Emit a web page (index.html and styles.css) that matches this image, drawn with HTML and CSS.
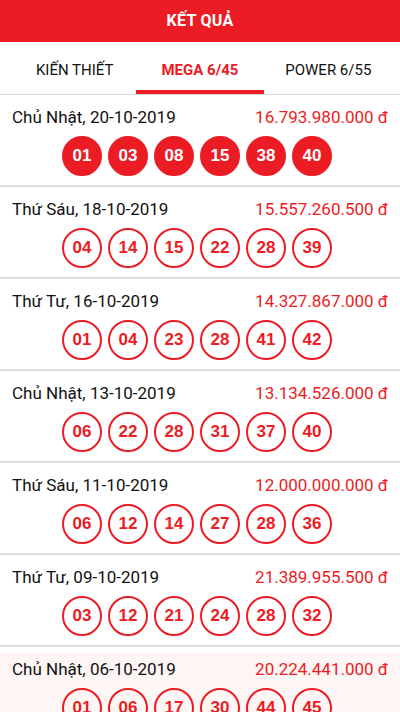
FILE: index.html
```html
<!DOCTYPE html>
<html lang="vi">
<head>
  <meta charset="UTF-8">
  <title>Kết quả Mega 6/45</title>
  <meta name="viewport" content="width=device-width, initial-scale=1.0">
  <link rel="stylesheet" href="styles.css">
</head>
<body>
  <!-- Top bar -->
  <header class="topbar">KẾT QUẢ</header>

  <!-- Game tabs -->
  <nav class="tabs">
    <div class="tab first">KIẾN THIẾT</div>
    <div class="tab active">MEGA 6/45</div>
    <div class="tab last">POWER 6/55</div>
  </nav>

  <!-- Draw results -->
  <main class="results">
    <div class="draw latest">
      <div class="draw-head">
        <span class="draw-date">Chủ Nhật, 20-10-2019</span>
        <span class="draw-jackpot">16.793.980.000 đ</span>
      </div>
      <div class="balls">
        <span class="ball">01</span><span class="ball">03</span><span class="ball">08</span>
        <span class="ball">15</span><span class="ball">38</span><span class="ball">40</span>
      </div>
    </div>

    <div class="draw">
      <div class="draw-head">
        <span class="draw-date">Thứ Sáu, 18-10-2019</span>
        <span class="draw-jackpot">15.557.260.500 đ</span>
      </div>
      <div class="balls">
        <span class="ball">04</span><span class="ball">14</span><span class="ball">15</span>
        <span class="ball">22</span><span class="ball">28</span><span class="ball">39</span>
      </div>
    </div>

    <div class="draw">
      <div class="draw-head">
        <span class="draw-date">Thứ Tư, 16-10-2019</span>
        <span class="draw-jackpot">14.327.867.000 đ</span>
      </div>
      <div class="balls">
        <span class="ball">01</span><span class="ball">04</span><span class="ball">23</span>
        <span class="ball">28</span><span class="ball">41</span><span class="ball">42</span>
      </div>
    </div>

    <div class="draw">
      <div class="draw-head">
        <span class="draw-date">Chủ Nhật, 13-10-2019</span>
        <span class="draw-jackpot">13.134.526.000 đ</span>
      </div>
      <div class="balls">
        <span class="ball">06</span><span class="ball">22</span><span class="ball">28</span>
        <span class="ball">31</span><span class="ball">37</span><span class="ball">40</span>
      </div>
    </div>

    <div class="draw">
      <div class="draw-head">
        <span class="draw-date">Thứ Sáu, 11-10-2019</span>
        <span class="draw-jackpot">12.000.000.000 đ</span>
      </div>
      <div class="balls">
        <span class="ball">06</span><span class="ball">12</span><span class="ball">14</span>
        <span class="ball">27</span><span class="ball">28</span><span class="ball">36</span>
      </div>
    </div>

    <div class="draw">
      <div class="draw-head">
        <span class="draw-date">Thứ Tư, 09-10-2019</span>
        <span class="draw-jackpot">21.389.955.500 đ</span>
      </div>
      <div class="balls">
        <span class="ball">03</span><span class="ball">12</span><span class="ball">21</span>
        <span class="ball">24</span><span class="ball">28</span><span class="ball">32</span>
      </div>
    </div>

    <div class="draw pressed">
      <div class="draw-head">
        <span class="draw-date">Chủ Nhật, 06-10-2019</span>
        <span class="draw-jackpot">20.224.441.000 đ</span>
      </div>
      <div class="balls">
        <span class="ball">01</span><span class="ball">06</span><span class="ball">17</span>
        <span class="ball">30</span><span class="ball">44</span><span class="ball">45</span>
      </div>
    </div>
  </main>
</body>
</html>
```

FILE: styles.css
```css
/* Lottery results screen, phone width */
body {
  margin: 0;
  height: 712px;
  overflow: hidden;
  font-family: Roboto, "Noto Sans", sans-serif;
  color: #111;
  background: #fff;
}

/* Red title bar */
.topbar {
  height: 42px;
  line-height: 42px;
  background: #ec1c24;
  color: #fff;
  text-align: center;
  font-size: 16px;
  font-weight: 700;
  letter-spacing: 0.3px;
}

/* Tabs */
.tabs {
  display: grid;
  grid-template-columns: 1fr 1fr 1fr;
  height: 52px;
  border-bottom: 1px solid #d6d6d6;
}
.tab {
  display: flex;
  align-items: center;
  justify-content: center;
  padding-top: 3px;
  font-size: 15px;
  color: #111;
}
.tab.first {
  padding-left: 16px;
}
.tab.last {
  padding-right: 10px;
}
.tab.active {
  color: #ec1c24;
  font-weight: 700;
  margin: 0 3px;
  border-bottom: 4px solid #ec1c24;
  padding-top: 7px;
}

/* Draw rows */
.draw {
  padding: 11px 12px 9px;
  border-bottom: 2px solid #dcdcdc;
}
.draw.pressed {
  background: linear-gradient(#fff 6px, #fdf6f4 6px);
}
.draw-head {
  display: flex;
  justify-content: space-between;
  align-items: center;
  height: 20px;
  padding-top: 1px;
  font-size: 17px;
}
.draw-jackpot {
  color: #ec1c24;
}

/* Number balls */
.balls {
  display: flex;
  justify-content: center;
  gap: 6px;
  margin-top: 9px;
  padding-right: 6px;
}
.ball {
  box-sizing: border-box;
  width: 40px;
  height: 40px;
  border: 2px solid #ec1c24;
  border-radius: 50%;
  display: flex;
  align-items: center;
  justify-content: center;
  font-family: "Liberation Sans", Arial, sans-serif;
  font-size: 17px;
  font-weight: 700;
  color: #ec1c24;
}
.latest .ball {
  background: #ec1c24;
  color: #fff;
}
```
